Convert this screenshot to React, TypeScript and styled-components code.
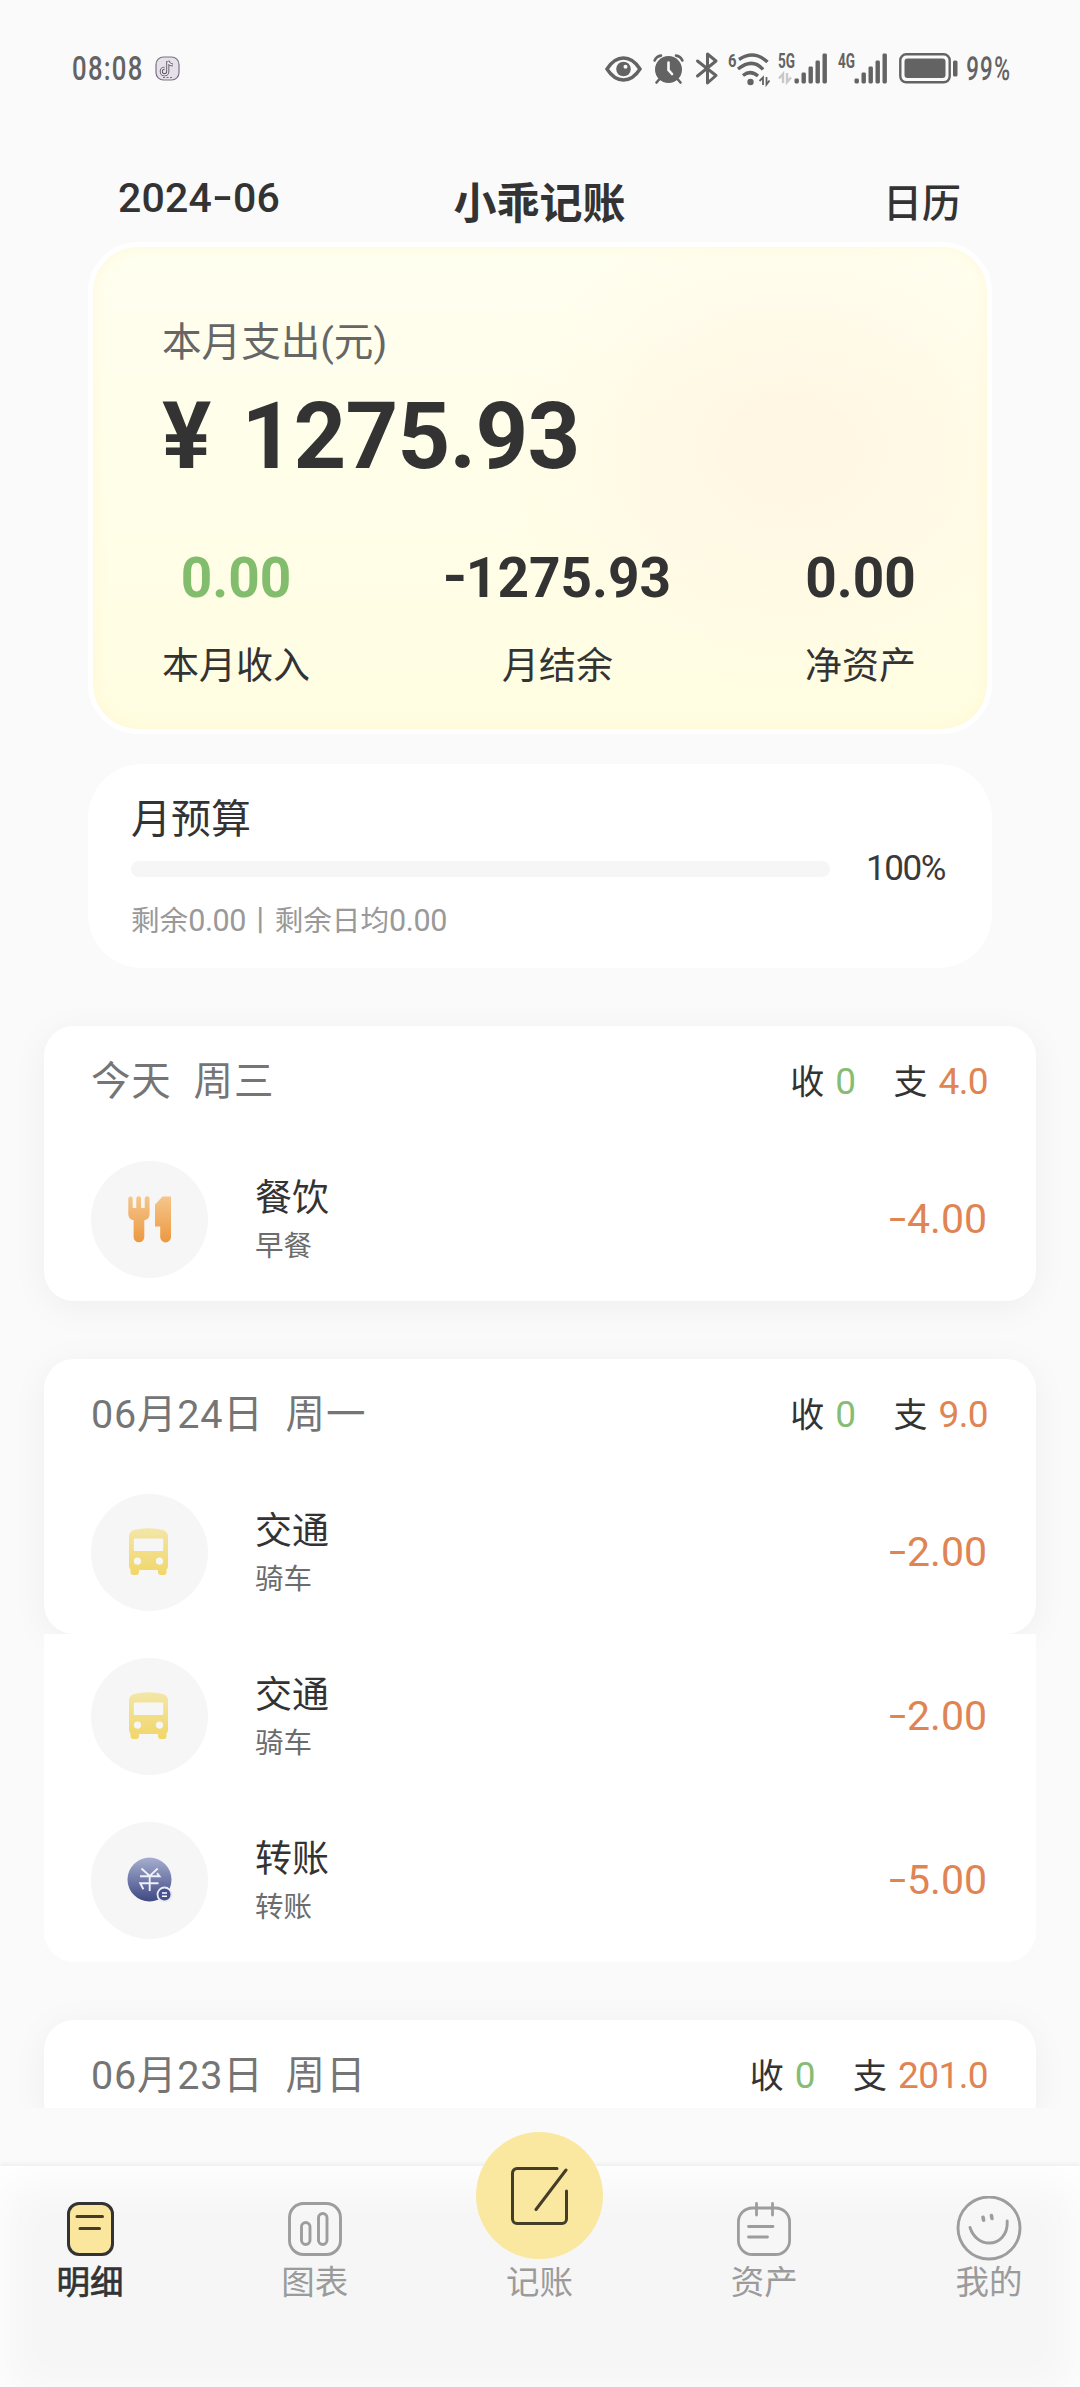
import React from "react";
import styled, { createGlobalStyle, css } from "styled-components";

const GlobalStyle = createGlobalStyle`
  * { box-sizing: border-box; }
  body {
    margin: 0;
    background: #fafafa;
    color: #333;
    font-family: Roboto, "Noto Sans CJK SC", sans-serif;
  }
`;

const Screen = styled.div`
  width: 1080px;
  height: 2387px;
  overflow: hidden;
  display: flex;
  flex-direction: column;
  background: #fafafa;
`;

/* ---------- status bar ---------- */

const StatusBar = styled.div`
  height: 164px;
  flex: none;
  display: flex;
  justify-content: space-between;
  padding: 48px 66px 0 72px;
  color: #636363;
`;

const StatusGroup = styled.div`
  display: flex;
  align-items: center;
  height: 41px;
`;

const Narrow = styled.span<{ $w: number; $scale: number; $skew?: number; $ml?: number }>`
  display: block;
  width: ${(p) => p.$w}px;
  margin-left: ${(p) => p.$ml ?? 0}px;
  font-size: 33px;
  line-height: 41px;
  letter-spacing: 1.6px;
  white-space: nowrap;
  font-weight: 500;
  transform: scaleX(${(p) => p.$scale}) skewX(${(p) => p.$skew ?? 0}deg);
  transform-origin: left center;
`;

const StatusIcon = styled.svg<{ $ml: number }>`
  display: block;
  flex: none;
  margin-left: ${(p) => p.$ml}px;
  overflow: visible;
`;

/* ---------- header ---------- */

const Header = styled.header`
  height: 78px;
  flex: none;
  display: grid;
  grid-template-columns: 1fr auto 1fr;
  align-items: start;
  padding: 0 119px 0 118px;
`;

const HeaderMonth = styled.div`
  font-size: 41px;
  font-weight: 500;
  line-height: 68px;
  letter-spacing: 0.2px;
`;

const HeaderTitle = styled.h1`
  margin: 0;
  font-size: 43px;
  font-weight: 700;
  line-height: 80px;
`;

const HeaderLink = styled.div`
  justify-self: end;
  font-size: 39px;
  font-weight: 500;
  line-height: 80px;
`;

const Dash = styled.span<{ $w: number; $scale: number; $up?: number }>`
  display: inline-block;
  width: ${(p) => p.$w}px;
  letter-spacing: 0;
  text-align: center;
  transform: translateY(${(p) => -(p.$up ?? 1)}px) scaleX(${(p) => p.$scale});
`;

/* ---------- summary ---------- */

const Summary = styled.section`
  flex: none;
  width: 904px;
  height: 492px;
  margin: 0 auto 0 88px;
  padding: 66px 71px 0 69px;
  border: 5px solid #fff;
  border-radius: 50px;
  background:
    radial-gradient(ellipse 290px 240px at 78% 42%, rgba(255, 245, 226, 0.9), rgba(255, 246, 228, 0.5) 55%, rgba(255, 249, 232, 0) 100%) padding-box,
    linear-gradient(#fffff0, #fffee9 45%, #fffde1) padding-box,
    #fff;
  box-shadow: inset 0 0 14px rgba(253, 244, 200, 0.6);
`;

const SummaryLabel = styled.div`
  font-size: 39.6px;
  line-height: 60px;
  color: #666;
`;

const SummaryAmount = styled.div`
  margin-top: 14px;
  font-size: 92px;
  font-weight: 700;
  line-height: 100px;
  letter-spacing: -0.8px;
  word-spacing: 9px;
  white-space: pre;
`;

const Stats = styled.div`
  display: flex;
  justify-content: space-between;
  margin-top: 61px;
`;

const Stat = styled.div`
  display: flex;
  flex-direction: column;
  align-items: center;
  gap: 34px;
`;

const StatValue = styled.div<{ $green?: boolean }>`
  font-size: 55px;
  font-weight: 700;
  line-height: 60px;
  color: ${(p) => (p.$green ? "#82bd6e" : "#333")};
`;

const StatLabel = styled.div`
  font-size: 37px;
  line-height: 50px;
`;

/* ---------- budget ---------- */

const Budget = styled.section`
  flex: none;
  width: 904px;
  height: 204px;
  margin: 30px auto 0 88px;
  padding: 31px 47px 0 43px;
  border-radius: 54px;
  background: #fff;
`;

const BudgetTitle = styled.div`
  font-size: 40px;
  line-height: 50px;
`;

const BudgetRow = styled.div`
  display: flex;
  align-items: center;
  justify-content: space-between;
  height: 40px;
  margin-top: 4px;
`;

const Track = styled.div`
  width: 699px;
  height: 16px;
  border-radius: 8px;
  background: #f6f6f6;
`;

const Percent = styled.div`
  font-size: 35px;
  line-height: 40px;
  letter-spacing: -1.4px;
  color: #3a3a3a;
`;

const BudgetNote = styled.div`
  margin-top: 11px;
  font-size: 28.6px;
  line-height: 41px;
  color: #999;
`;

const NoteNumber = styled.span`
  font-size: 30.5px;
  letter-spacing: -0.4px;
`;

/* ---------- ledger ---------- */

const Ledger = styled.main`
  flex: none;
  height: 1140px;
  overflow: hidden;
  display: flex;
  flex-direction: column;
  gap: 58px;
  padding: 58px 44px 0;
`;

const Day = styled.section`
  flex: none;
`;

const DayCard = styled.div`
  border-radius: 30px;
  background: #fff;
  box-shadow: 0 6px 36px rgba(0, 0, 0, 0.05);
`;

const DayMore = styled.div`
  position: relative;
  border-radius: 0 0 30px 30px;
  background: #fff;
`;

const DayHead = styled.div`
  height: 111px;
  display: flex;
  align-items: center;
  justify-content: space-between;
  padding: 1px 48px 0 47px;
`;

const DayName = styled.div`
  display: flex;
  gap: 22px;
  font-size: 39.5px;
  line-height: 50px;
  letter-spacing: 0.8px;
  color: #757575;
`;

const Totals = styled.div`
  display: flex;
  gap: 38px;
`;

const Total = styled.div`
  display: flex;
  gap: 11px;
  font-size: 34px;
  line-height: 50px;
`;

const TotalValue = styled.span<{ $kind: "in" | "out" }>`
  font-size: 37px;
  line-height: 49px;
  letter-spacing: -0.6px;
  color: ${(p) => (p.$kind === "in" ? "#86bd74" : "#df8452")};
`;

const Row = styled.div`
  height: 164px;
  display: flex;
  align-items: center;
  padding: 0 49px 0 47px;
`;

const IconDisc = styled.div`
  width: 117px;
  height: 117px;
  flex: none;
  display: flex;
  align-items: center;
  justify-content: center;
  border-radius: 50%;
  background: #f6f6f6;
`;

const RowText = styled.div`
  flex: 1;
  display: flex;
  flex-direction: column;
  gap: 3px;
  margin-left: 47px;
  padding-top: 3px;
`;

const RowTitle = styled.div`
  font-size: 37px;
  line-height: 50px;
`;

const RowNote = styled.div`
  font-size: 28.5px;
  line-height: 40px;
  color: #6c6c6c;
`;

const RowAmount = styled.div`
  font-size: 41px;
  line-height: 50px;
  color: #df8452;
`;

/* ---------- tab bar ---------- */

const TabBar = styled.nav`
  flex: none;
  height: 221px;
  margin-top: 58px;
  padding: 31px 31px 0 30px;
  display: flex;
  align-items: flex-start;
  justify-content: space-between;
  background: #f6f6f6;
  box-shadow: 0 -2px 4px rgba(0, 0, 0, 0.05), inset 0 14px 46px 4px #fff;
`;

const Tab = styled.div<{ $active?: boolean }>`
  width: 120px;
  display: flex;
  flex-direction: column;
  align-items: center;
  font-size: 33.5px;
  line-height: 44px;
  color: #9b9b9b;
  ${(p) =>
    p.$active &&
    css`
      color: #333;
      -webkit-text-stroke: 0.7px #333;
    `}
`;

const TabIcon = styled.div`
  height: 64px;
  display: flex;
  align-items: center;
  justify-content: center;
`;

const AddDisc = styled.div`
  width: 127px;
  height: 127px;
  margin: -65px 0 2px;
  display: flex;
  align-items: center;
  justify-content: center;
  border-radius: 50%;
  background: #fae8a0;
`;

/* ---------- drawings ---------- */

const ForkKnife = () => (
  <svg width="44" height="48" viewBox="0 0 44 48">
    <defs>
      <linearGradient id="food" x1="0" y1="0" x2="0" y2="1">
        <stop offset="0" stopColor="#f5c68c" />
        <stop offset="1" stopColor="#ec9840" />
      </linearGradient>
    </defs>
    <g transform="translate(0 1)">
      <path
        fill="url(#food)"
        d="M2.500 .5a2.200 2.200 0 0 1 2.200 2.200V12h3.600V2.700a2.200 2.200 0 0 1 4.800 0V12h3.600V2.700a2.200 2.200 0 0 1 4.900 0V18q0 5.500-5.300 6.200V41a5.300 5.300 0 0 1-10.700 0V24.200Q.3 23.500.3 18V2.700A2.200 2.200 0 0 1 2.500.5z"
      />
      <path fill="url(#food)" d="M34.500.5H43V41a5.400 5.400 0 0 1-10.800 0V30.500H27V8.500z" />
    </g>
  </svg>
);

const Bus = () => (
  <svg width="44" height="48" viewBox="0 0 44 48">
    <defs>
      <linearGradient id="bus" x1="0" y1="0" x2="0" y2="1">
        <stop offset="0" stopColor="#f3e6a8" />
        <stop offset="1" stopColor="#f1d668" />
      </linearGradient>
    </defs>
    <path
      fill="url(#bus)"
      fillRule="evenodd"
      d="M1 9Q1 3.500 6 2 13 .2 20.500.2T35 2q5 1.500 5 7v29q0 2-1.500 3.500V44a3 3 0 0 1-3 3h-2.500a3 3 0 0 1-3-3v-2h-19v2a3 3 0 0 1-3 3H5.500a3 3 0 0 1-3-3v-2.500Q1 40 1 38zM7 10.500q-1.200 0-1.200 1.200v10q0 1.200 1.200 1.200h27q1.200 0 1.200-1.200v-10q0-1.200-1.200-1.200zM9.500 29.500a3.600 3.600 0 1 0 .01 7.200 3.600 3.600 0 0 0-.01-7.200zM31.500 29.500a3.600 3.600 0 1 0 .01 7.200 3.600 3.600 0 0 0-.01-7.200z"
    />
  </svg>
);

const Transfer = () => (
  <svg width="46" height="46" viewBox="0 0 46 46">
    <defs>
      <linearGradient id="transfer" x1="0" y1="0" x2="0" y2="1">
        <stop offset="0" stopColor="#a6aed0" />
        <stop offset="1" stopColor="#3f4983" />
      </linearGradient>
    </defs>
    <circle cx="22.500" cy="22.500" r="22" fill="url(#transfer)" />
    <path
      d="M14.500 11.500l8.200 7.500 8-7.500M22.700 19v15M13 19.200h19.500l-2.500-3M31.500 26.200H13.200l3.200 6"
      fill="none"
      stroke="#eef0fa"
      strokeWidth="1.900"
    />
    <circle cx="37.500" cy="37.500" r="7" fill="#48528c" stroke="#e9ebf5" strokeWidth="1.800" />
    <path d="M35 36h5M35 39.200h5" stroke="#fff" strokeWidth="1.500" />
  </svg>
);

const DetailIcon = () => (
  <svg width="47" height="54" viewBox="0 0 47 54" strokeLinecap="round">
    <rect x="1.500" y="1.500" width="44" height="51" rx="10.500" fill="#fae69c" stroke="#333" strokeWidth="3" />
    <path d="M10 14.500h25.500M13 26.500h19.500" stroke="#443c28" strokeWidth="3" />
  </svg>
);

const ChartIcon = () => (
  <svg width="54" height="54" viewBox="0 0 54 54" fill="none" stroke="#9d9d9d" strokeWidth="2.900">
    <rect x="1.500" y="1.500" width="51" height="51" rx="14" />
    <rect x="13.500" y="20.500" width="8.500" height="22" rx="4.250" />
    <rect x="30.500" y="11.500" width="8.500" height="31" rx="4.250" />
  </svg>
);

const EditIcon = () => (
  <svg width="57" height="58" viewBox="0 0 57 58" fill="none" stroke="#443d28" strokeWidth="3" strokeLinecap="round">
    <path d="M46 1.500H6a4.500 4.500 0 0 0-4.500 4.500v46A4.500 4.500 0 0 0 6 56.500h45a4.500 4.500 0 0 0 4.500-4.500V24" />
    <path d="M55 3L25 42.500" />
  </svg>
);

const AssetIcon = () => (
  <svg width="54" height="54" viewBox="0 0 54 54" fill="none" stroke="#9d9d9d" strokeWidth="2.800" strokeLinecap="round">
    <rect x="1.400" y="6" width="51.200" height="46.500" rx="14" />
    <path d="M19.500 1.500v11.500M35.500 1.500v11.500M11.500 24.500h24.500M11.500 35h19" />
  </svg>
);

const SmileIcon = () => (
  <svg width="66" height="66" viewBox="0 0 66 66" fill="none" stroke="#9d9d9d" strokeWidth="2.900" strokeLinecap="round">
    <circle cx="33" cy="32" r="31" />
    <path d="M14 31.500c3 9.500 10.500 15.500 19.500 15.500S52 39.500 51.200 25" />
    <path d="M27 21.200l.6 3M35.400 19.500l.6 3" strokeWidth="3.600" />
  </svg>
);

const Douyin = () => (
  <StatusIcon $ml={12} width="25" height="25" viewBox="0 0 25 25" fill="none">
    <rect x="1" y="1" width="23" height="23" rx="7.500" fill="#e6e0ea" stroke="#77747f" strokeWidth="1.200" />
    <path d="M12.800 5v10.500a3.300 3.300 0 1 1-3.300-3.300M12.800 5q1 3.600 5 4" stroke="#57525f" strokeWidth="3" />
    <path d="M12.800 5.500v10a3.300 3.300 0 1 1-3.300-3.300M13 5.500q1 3 4.600 3.500" stroke="#f3eff6" strokeWidth="1.200" />
    <path d="M8 21.500h10" stroke="#77747f" strokeWidth="1" strokeDasharray="2 1.500" />
  </StatusIcon>
);

const Eye = () => (
  <StatusIcon $ml={0} width="37" height="26" viewBox="0 0 37 26">
    <path d="M2 13Q9 2 18.500 2T35 13Q28 24 18.500 24T2 13z" fill="none" stroke="#636363" strokeWidth="3.400" />
    <circle cx="18.500" cy="13" r="7.300" fill="#636363" />
    <circle cx="20.500" cy="10.800" r="2" fill="#fafafa" />
  </StatusIcon>
);

const Alarm = () => (
  <StatusIcon $ml={11} width="31" height="30" viewBox="0 0 31 30" fill="none" stroke="#636363" strokeWidth="2.600" strokeLinecap="round">
    <circle cx="15.500" cy="15.500" r="13.500" fill="#636363" stroke="none" />
    <path d="M1.600 6.500Q3.500 2 8 1.600M29.400 6.500Q27.500 2 23 1.600M6.500 25l-3 3.500M24.500 25l3 3.500" />
    <path d="M15.500 8.500v7.500l3.500 4" stroke="#fafafa" />
  </StatusIcon>
);

const Bluetooth = () => (
  <StatusIcon $ml={12} width="22" height="33" viewBox="0 0 22 33" fill="none" stroke="#636363" strokeWidth="3" strokeLinejoin="round" strokeLinecap="round">
    <path d="M1.500 9l18.500 14.500L11.500 31V2L20 9 1.500 24" />
  </StatusIcon>
);

const Wifi = () => (
  <StatusIcon $ml={10} width="42" height="34" viewBox="0 0 42 34" fill="none" stroke="#636363" strokeWidth="3.400">
    <text x="0" y="15" fontSize="19" fontWeight="700" fill="#636363" stroke="none" textLength="8.500" lengthAdjust="spacingAndGlyphs">6</text>
    <path d="M11 7.500Q26-2.500 39.500 10M10 17q14.500-11.500 25 .5M15 23.500q7.500-6 15 .5" />
    <circle cx="22.500" cy="30" r="3.200" fill="#636363" stroke="none" />
    <path d="M35 33v-7.500l-3.500 3.500M38.500 25v7.500l3-4" strokeWidth="1.800" />
  </StatusIcon>
);

const bars = [
  [0, 25, 5],
  [7, 19, 11],
  [14, 13, 17],
  [21, 7, 23],
  [28, 0, 30],
];

const Signal = ({ label, arrows, ml }: { label: string; arrows?: boolean; ml: number }) => {
  const start = 16.5;
  return (
    <StatusIcon $ml={ml} width="49" height="33" viewBox="0 0 49 33">
      <text x="0" y="15.500" fontSize="19.500" fontWeight="700" fill="#636363" textLength="17" lengthAdjust="spacingAndGlyphs">
        {label}
      </text>
      {arrows && <path d="M5 31v-9l-4 4.500M9 21v9l4-4.500" fill="none" stroke="#c9c9c9" strokeWidth="2.400" />}
      {bars.map(([x, y, h]) => (
        <rect key={x} x={start + x} y={y + 1.5} width="4.400" height={h} rx="1.400" fill="#636363" />
      ))}
    </StatusIcon>
  );
};

const Battery = () => (
  <StatusIcon $ml={12} width="59" height="31" viewBox="0 0 59 31">
    <rect x="1.300" y="1.300" width="49.400" height="28" rx="6" fill="none" stroke="#636363" strokeWidth="2.400" />
    <rect x="5.500" y="5.500" width="41" height="19.500" rx="3" fill="#636363" />
    <rect x="54" y="7.500" width="4.500" height="16" rx="1.500" fill="#636363" />
  </StatusIcon>
);

/* ---------- data ---------- */

type Entry = { icon: React.ReactNode; title: string; note: string; amount: string };
type DayData = { date: string; week: string; income: string; outcome: string; entries: Entry[] };

const days: DayData[] = [
  {
    date: "今天",
    week: "周三",
    income: "0",
    outcome: "4.0",
    entries: [{ icon: <ForkKnife />, title: "餐饮", note: "早餐", amount: "4.00" }],
  },
  {
    date: "06月24日",
    week: "周一",
    income: "0",
    outcome: "9.0",
    entries: [
      { icon: <Bus />, title: "交通", note: "骑车", amount: "2.00" },
      { icon: <Bus />, title: "交通", note: "骑车", amount: "2.00" },
      { icon: <Transfer />, title: "转账", note: "转账", amount: "5.00" },
    ],
  },
  { date: "06月23日", week: "周日", income: "0", outcome: "201.0", entries: [] },
];

const EntryRow = ({ entry }: { entry: Entry }) => (
  <Row>
    <IconDisc>{entry.icon}</IconDisc>
    <RowText>
      <RowTitle>{entry.title}</RowTitle>
      <RowNote>{entry.note}</RowNote>
    </RowText>
    <RowAmount>
      <Dash $w={19} $scale={1.5} $up={1}>-</Dash>
      {entry.amount}
    </RowAmount>
  </Row>
);

const DayBlock = ({ day }: { day: DayData }) => {
  const [first, ...rest] = day.entries;
  return (
    <Day>
      <DayCard>
        <DayHead>
          <DayName>
            <span>{day.date}</span>
            <span>{day.week}</span>
          </DayName>
          <Totals>
            <Total>
              收<TotalValue $kind="in">{day.income}</TotalValue>
            </Total>
            <Total>
              支<TotalValue $kind="out">{day.outcome}</TotalValue>
            </Total>
          </Totals>
        </DayHead>
        {first && <EntryRow entry={first} />}
      </DayCard>
      {rest.length > 0 && (
        <DayMore>
          {rest.map((entry, i) => (
            <EntryRow key={i} entry={entry} />
          ))}
        </DayMore>
      )}
    </Day>
  );
};

export default function App() {
  return (
    <Screen>
      <GlobalStyle />
      <StatusBar>
        <StatusGroup>
          <Narrow $w={71} $scale={0.78}>08:08</Narrow>
          <Douyin />
        </StatusGroup>
        <StatusGroup>
          <Eye />
          <Alarm />
          <Bluetooth />
          <Wifi />
          <Signal label="5G" arrows ml={8} />
          <Signal label="4G" ml={11} />
          <Battery />
          <Narrow $w={48} $ml={8} $scale={0.68} $skew={-4}>99%</Narrow>
        </StatusGroup>
      </StatusBar>

      <Header>
        <HeaderMonth>
          2024<Dash $w={21} $scale={1.45}>-</Dash>06
        </HeaderMonth>
        <HeaderTitle>小乖记账</HeaderTitle>
        <HeaderLink>日历</HeaderLink>
      </Header>

      <Summary>
        <SummaryLabel>本月支出(元)</SummaryLabel>
        <SummaryAmount>¥ 1275.93</SummaryAmount>
        <Stats>
          <Stat>
            <StatValue $green>0.00</StatValue>
            <StatLabel>本月收入</StatLabel>
          </Stat>
          <Stat>
            <StatValue>
              <Dash $w={22} $scale={1.15} $up={2}>-</Dash>1275.93
            </StatValue>
            <StatLabel>月结余</StatLabel>
          </Stat>
          <Stat>
            <StatValue>0.00</StatValue>
            <StatLabel>净资产</StatLabel>
          </Stat>
        </Stats>
      </Summary>

      <Budget>
        <BudgetTitle>月预算</BudgetTitle>
        <BudgetRow>
          <Track />
          <Percent>100%</Percent>
        </BudgetRow>
        <BudgetNote>
          剩余<NoteNumber>0.00</NoteNumber>丨剩余日均<NoteNumber>0.00</NoteNumber>
        </BudgetNote>
      </Budget>

      <Ledger>
        {days.map((day) => (
          <DayBlock key={day.date} day={day} />
        ))}
      </Ledger>

      <TabBar>
        <Tab $active>
          <TabIcon><DetailIcon /></TabIcon>
          明细
        </Tab>
        <Tab>
          <TabIcon><ChartIcon /></TabIcon>
          图表
        </Tab>
        <Tab>
          <AddDisc><EditIcon /></AddDisc>
          记账
        </Tab>
        <Tab>
          <TabIcon><AssetIcon /></TabIcon>
          资产
        </Tab>
        <Tab>
          <TabIcon><SmileIcon /></TabIcon>
          我的
        </Tab>
      </TabBar>
    </Screen>
  );
}
